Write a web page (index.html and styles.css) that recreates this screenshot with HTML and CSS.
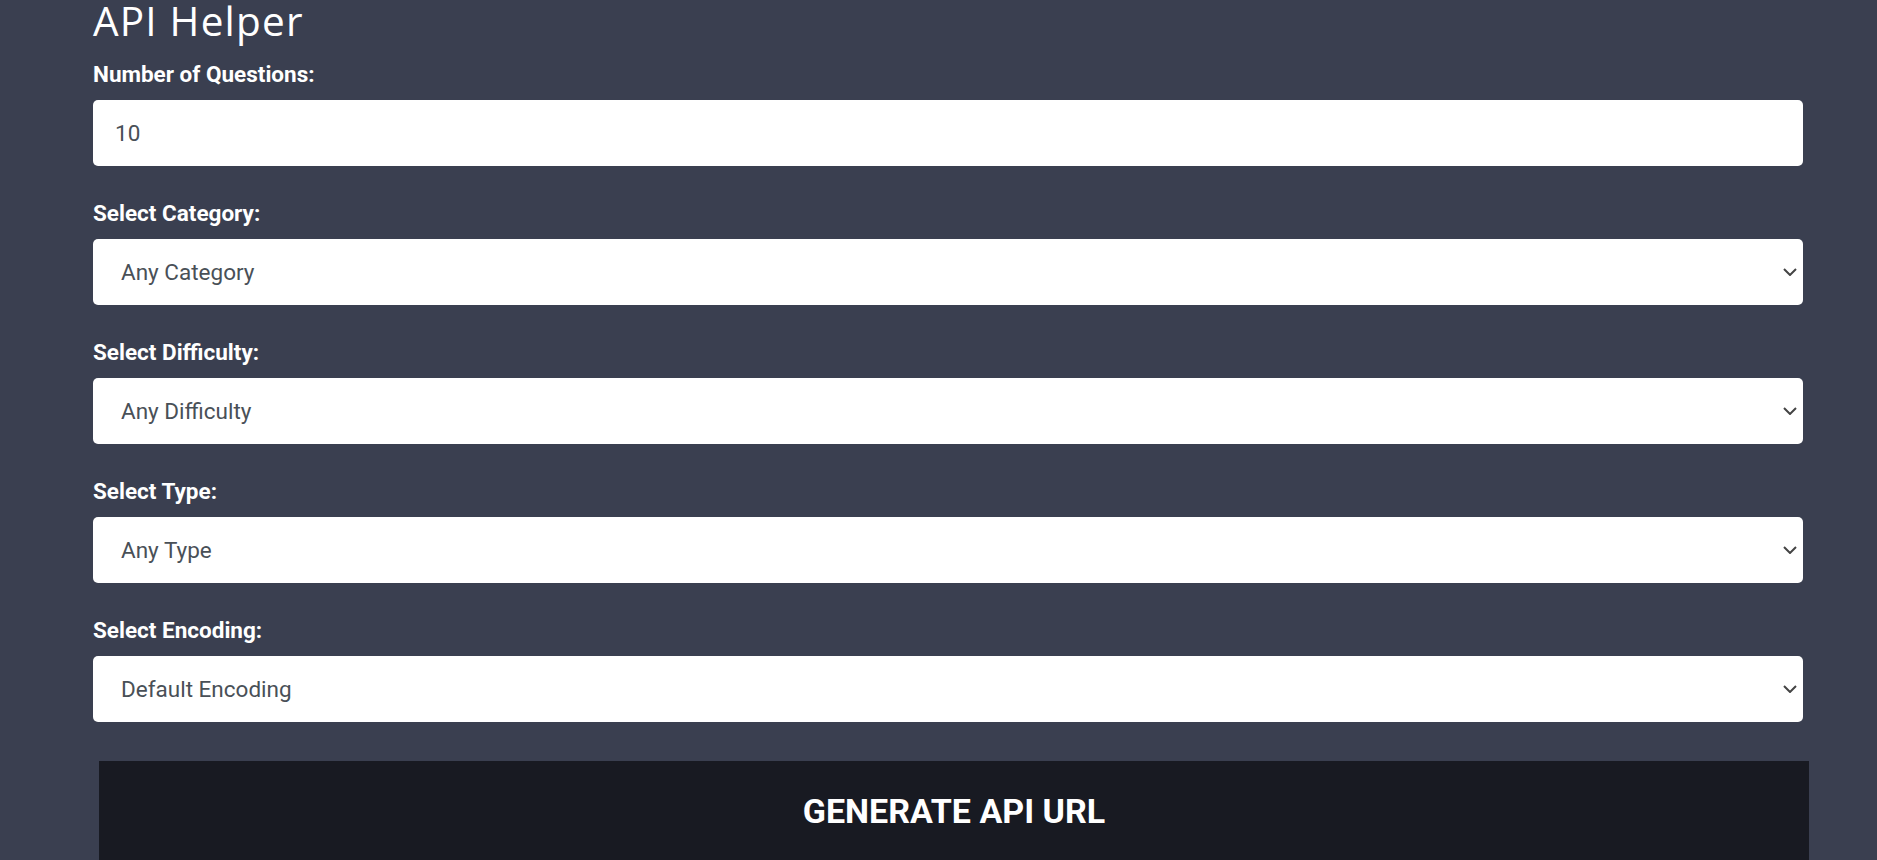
FILE: index.html
```html
<!DOCTYPE html>
<html lang="en">
<head>
<meta charset="utf-8">
<title>API Helper</title>
<link rel="stylesheet" href="styles.css">
</head>
<body>
<main class="page">
  <h1 class="title">API Helper</h1>
  <form class="form">
    <div class="group">
      <label class="label" for="num">Number of Questions:</label>
      <input class="field" id="num" type="text" value="10">
    </div>
    <div class="group">
      <label class="label" for="cat">Select Category:</label>
      <select class="field select" id="cat"><option>Any Category</option></select>
    </div>
    <div class="group">
      <label class="label" for="diff">Select Difficulty:</label>
      <select class="field select" id="diff"><option>Any Difficulty</option></select>
    </div>
    <div class="group">
      <label class="label" for="type">Select Type:</label>
      <select class="field select" id="type"><option>Any Type</option></select>
    </div>
    <div class="group">
      <label class="label" for="enc">Select Encoding:</label>
      <select class="field select" id="enc"><option>Default Encoding</option></select>
    </div>
    <button class="generate" type="button">GENERATE API URL</button>
  </form>
</main>
</body>
</html>
```

FILE: styles.css
```css
html, body {
  margin: 0;
  padding: 0;
  background: #3a3f50;
  overflow: hidden;
}

body {
  font-family: Roboto, "Liberation Sans", sans-serif;
  color: #ffffff;
}

.page {
  width: 1710px;
  padding-left: 93px;
  padding-top: 1px;
}

.title {
  margin: 0 0 20px;
  font-family: "Open Sans", "Liberation Sans", sans-serif;
  font-weight: 400;
  font-size: 40.5px;
  line-height: 40px;
  letter-spacing: 1.2px;
  color: #ffffff;
}

.form {
  display: flex;
  flex-direction: column;
}

.group {
  display: flex;
  flex-direction: column;
  margin-bottom: 34px;
}

.group:last-of-type {
  margin-bottom: 39px;
}

.label {
  font-size: 22.5px;
  font-weight: 700;
  line-height: 27px;
  margin-bottom: 12px;
  color: #ffffff;
}

.field {
  box-sizing: border-box;
  width: 100%;
  height: 66px;
  margin: 0;
  border: none;
  border-radius: 5px;
  background-color: #ffffff;
  font-family: Roboto, "Liberation Sans", sans-serif;
  font-size: 22.5px;
  color: #495057;
  padding: 0 22px;
  outline: none;
}

.select {
  appearance: none;
  -webkit-appearance: none;
  padding-left: 28px;
  background-image: url("data:image/svg+xml,%3Csvg xmlns='http://www.w3.org/2000/svg' width='14' height='8' viewBox='0 0 14 8'%3E%3Cpath d='M1 1l6 6 6-6' fill='none' stroke='%23444' stroke-width='2'/%3E%3C/svg%3E");
  background-repeat: no-repeat;
  background-position: right 6px center;
  background-size: 14px 8px;
}

.generate {
  box-sizing: border-box;
  width: 100%;
  margin-left: 6px;
  padding: 30px 0 40px;
  border: none;
  border-radius: 0;
  background: #181a22;
  color: #ffffff;
  font-family: Roboto, "Liberation Sans", sans-serif;
  font-weight: 700;
  font-size: 34px;
  line-height: 40px;
  text-align: center;
}
```
